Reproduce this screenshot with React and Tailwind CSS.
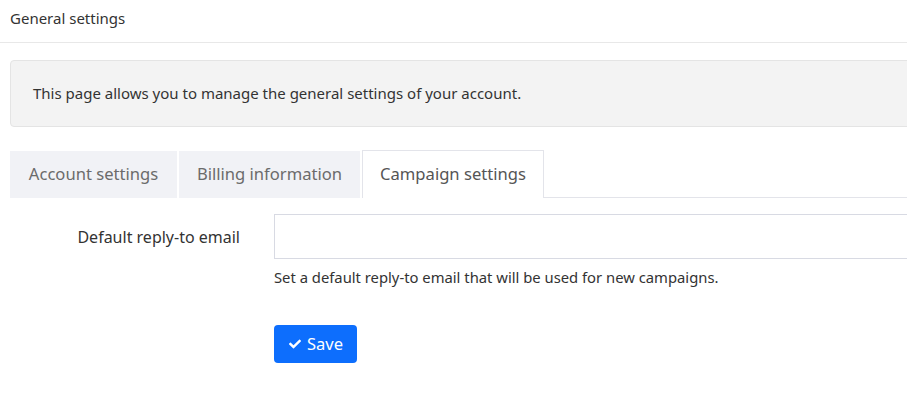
import React from 'react';

function CheckIcon() {
  return (
    <svg width="14" height="12" viewBox="0 0 512 512" fill="currentColor">
      <path d="M173.9 439.4l-166.4-166.4c-10-10-10-26.2 0-36.2l36.2-36.2c10-10 26.2-10 36.2 0L192 312.7 432.1 72.6c10-10 26.2-10 36.2 0l36.2 36.2c10 10 10 26.2 0 36.2l-294.4 294.4c-10 10-26.2 10-36.2 0z" />
    </svg>
  );
}

export default function App() {
  const tabs = [
    { label: 'Account settings', w: 'w-[167px]' },
    { label: 'Billing information', w: 'w-[181px]' },
  ];

  return (
    <div className="w-[907px] h-[397px] overflow-hidden bg-white text-[#333] font-['Noto_Sans',sans-serif]">
      {/* Header */}
      <div className="h-[43px] border-b border-[#e8e8e8] pl-[10px] pt-[7px] text-[15px] text-[#333]">
        General settings
      </div>

      <div className="pl-[10px]">
        {/* Info box */}
        <div className="mt-[17px] w-[910px] h-[67px] bg-[#f3f3f3] border border-[#e4e4e4] rounded-[4px] pl-[22px] flex items-center text-[15px] text-[#333]">
          This page allows you to manage the general settings of your account.
        </div>

        {/* Tabs */}
        <div className="mt-[23px] flex items-end h-[48px]">
          {tabs.map((t) => (
            <div
              key={t.label}
              className={`${t.w} shrink-0 h-[47px] mr-[2px] bg-[#f1f2f6] flex items-center justify-center text-[16.6px] text-[#6b6b6b]`}
            >
              {t.label}
            </div>
          ))}
          <div className="w-[182px] shrink-0 h-[48px] bg-white border border-b-0 border-[#e3e4ea] flex items-center justify-center text-[16.6px] text-[#555]">
            Campaign settings
          </div>
          <div className="flex-1 h-[48px] border-b border-[#e3e4ea]" />
        </div>

        {/* Form */}
        <div className="mt-[16px] flex">
          <div className="w-[230px] shrink-0 pt-[11px] text-right text-[16px] text-[#333]">
            Default reply-to email
          </div>
          <div className="ml-[34px] shrink-0 w-[700px]">
            <div className="h-[45px] border border-[#d8dae3] bg-white w-[700px]" />
            <div className="mt-[7px] text-[14.8px] text-[#333]">
              Set a default reply-to email that will be used for new campaigns.
            </div>
            <button className="mt-[37px] h-[38px] w-[83px] bg-[#0d6efd] text-white rounded-[4px] flex items-center justify-center gap-[5px] text-[16.5px]">
              <CheckIcon />
              Save
            </button>
          </div>
        </div>
      </div>
    </div>
  );
}
